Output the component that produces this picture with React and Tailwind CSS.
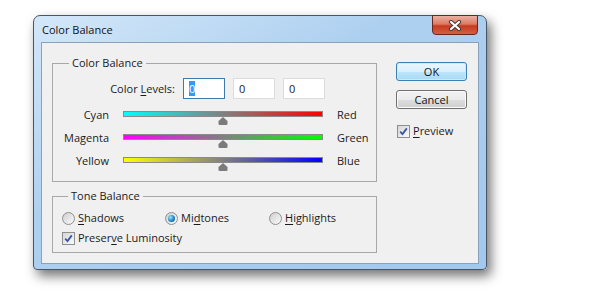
import React from "react";

const Mn = ({ children }) => <u className="underline underline-offset-[2px]">{children}</u>;

const CheckBox = () => (
    <span className="flex h-[13px] w-[13px] shrink-0 items-center justify-center border border-[#8e8f8f] bg-white">
        <span className="flex h-[11px] w-[11px] items-center justify-center bg-linear-to-br from-[#d6d6d6] to-[#fafafa]">
            <svg width="9" height="9" viewBox="0 0 9 9">
                <path d="M1.2 4.6 L3.5 7 L7.8 1.4" fill="none" stroke="#3a56a3" strokeWidth="1.8" />
            </svg>
        </span>
    </span>
);

const Radio = ({ on }) => (
    <span className="flex h-[13px] w-[13px] shrink-0 items-center justify-center rounded-full border border-[#8e8f8f] bg-linear-to-br from-[#cfcfcf] to-[#fbfbfb]">
        {on && (
            <span className="h-[7px] w-[7px] rounded-full bg-[radial-gradient(circle_at_35%_35%,#9be6ff,#1f86c6_55%,#0c3f6e)]" />
        )}
    </span>
);

const Thumb = () => (
    <svg width="10" height="8" viewBox="0 0 10 8" className="block">
        <path d="M5 0 L9.5 4 V6.8 Q9.5 8 8.3 8 H1.7 Q0.5 8 0.5 6.8 V4 Z" fill="#7b7b7b" />
    </svg>
);

const sliders = [
    { left: "Cyan", right: "Red", track: "bg-[linear-gradient(to_right,#00ffff,#808080_50%,#ff0000)]" },
    { left: "Magenta", right: "Green", track: "bg-[linear-gradient(to_right,#ff00ff,#808080_50%,#00ff00)]" },
    { left: "Yellow", right: "Blue", track: "bg-[linear-gradient(to_right,#ffff00,#808080_50%,#0000ff)]" },
];

const App = () => {
    return (
        <div className="h-[300px] w-[600px] bg-white pl-[33px] pt-[15px] font-['Open_Sans',sans-serif] text-[11px] leading-[16px] text-[#1b1b1b]">
            <div className="flex h-[255px] w-[454px] flex-col rounded-t-[7px] rounded-b-[4px] border border-[#4b5563] bg-[linear-gradient(to_bottom_right,#d3e7f9,#aed0f0_40%,#a2c8ee)] shadow-[4px_6px_12px_rgba(0,0,0,0.55)]">
                {/* title bar */}
                <div className="flex h-[26px] shrink-0 items-start justify-between">
                    <span className="pl-[8px] pt-[6px] text-[#111]">Color Balance</span>
                    <div className="-mt-px mr-[8px] flex h-[20px] w-[46px] items-center justify-center rounded-b-[4px] border border-[#6a2618] bg-[linear-gradient(to_bottom,#eab1a3,#dc7a63_45%,#c63a20_55%,#d4603f)]">
                        <svg width="14" height="11" viewBox="0 0 14 11">
                            <path d="M3 2 L11 9 M11 2 L3 9" stroke="#4a3a3a" strokeWidth="4.2" strokeLinecap="round" />
                            <path d="M3 2 L11 9 M11 2 L3 9" stroke="#ffffff" strokeWidth="2.2" strokeLinecap="round" />
                        </svg>
                    </div>
                </div>

                {/* client area */}
                <div className="mx-[7px] flex h-[222px] border border-[#8aa1bb] bg-[#f0f0f0] pl-[10px]">
                    <div className="flex w-[325px] flex-col pt-[12px]">
                        <fieldset className="h-[127px] border border-[#a8a8a8] pl-px">
                            <legend className="ml-[15px] px-[3px]">Color Balance</legend>
                            <div className="mt-[7px] flex items-center">
                                <span className="w-[121px] text-right">
                                    Color <Mn>L</Mn>evels:
                                </span>
                                <div className="ml-[8px] flex gap-[8px]">
                                    <div className="h-[21px] w-[42px] border border-[#3d7bad] bg-white pl-[5px] leading-[19px]">
                                        <span className="bg-[#3399ff] text-white">0</span>
                                    </div>
                                    <div className="h-[21px] w-[42px] border border-[#dcdcdc] bg-white pl-[5px] leading-[19px]">0</div>
                                    <div className="h-[21px] w-[42px] border border-[#dcdcdc] bg-white pl-[5px] leading-[19px]">0</div>
                                </div>
                            </div>
                            <div className="mt-[8px] flex flex-col">
                                {sliders.map((s) => (
                                    <div key={s.left} className="flex h-[23px] items-start">
                                        <span className="w-[55px] text-right">{s.left}</span>
                                        <div className="ml-[14px] flex w-[200px] flex-col items-center pt-[4px]">
                                            <div className={`h-[6px] w-full border border-[#8a8a8a] ${s.track}`} />
                                            <Thumb />
                                        </div>
                                        <span className="ml-[14px]">{s.right}</span>
                                    </div>
                                ))}
                            </div>
                        </fieldset>

                        <fieldset className="mt-[6px] h-[65px] border border-[#a8a8a8] pl-[9px]">
                            <legend className="ml-[6px] px-[3px]">Tone Balance</legend>
                            <div className="mt-[6px] flex items-center">
                                <label className="flex w-[103px] items-center gap-[3px]">
                                    <Radio />
                                    <span>
                                        <Mn>S</Mn>hadows
                                    </span>
                                </label>
                                <label className="flex w-[104px] items-center gap-[3px]">
                                    <Radio on />
                                    <span>
                                        Mi<Mn>d</Mn>tones
                                    </span>
                                </label>
                                <label className="flex items-center gap-[3px]">
                                    <Radio />
                                    <span>
                                        <Mn>H</Mn>ighlights
                                    </span>
                                </label>
                            </div>
                            <label className="mt-[4px] flex items-center gap-[3px]">
                                <CheckBox />
                                <span>
                                    Preser<Mn>v</Mn>e Luminosity
                                </span>
                            </label>
                        </fieldset>
                    </div>

                    {/* buttons */}
                    <div className="ml-[19px] flex flex-col pt-[19px]">
                        <button className="h-[19px] w-[71px] rounded-[3px] border border-[#3c7fb1] bg-[linear-gradient(to_bottom,#eaf6fd,#d9f0fc_50%,#bee6fd_51%,#a7d9f5)] leading-[16px] text-[#111] shadow-[inset_0_0_0_1px_#c8ecfb]">
                            OK
                        </button>
                        <button className="mt-[9px] h-[19px] w-[71px] rounded-[3px] border border-[#707070] bg-[linear-gradient(to_bottom,#f2f2f2,#ebebeb_50%,#dddddd_51%,#cfcfcf)] leading-[16px] text-[#111] shadow-[inset_0_0_0_1px_#fbfbfb]">
                            Cancel
                        </button>
                        <label className="ml-px mt-[14px] flex items-center gap-[3px]">
                            <CheckBox />
                            <span>
                                <Mn>P</Mn>review
                            </span>
                        </label>
                    </div>
                </div>
            </div>
        </div>
    );
};

export default App;
